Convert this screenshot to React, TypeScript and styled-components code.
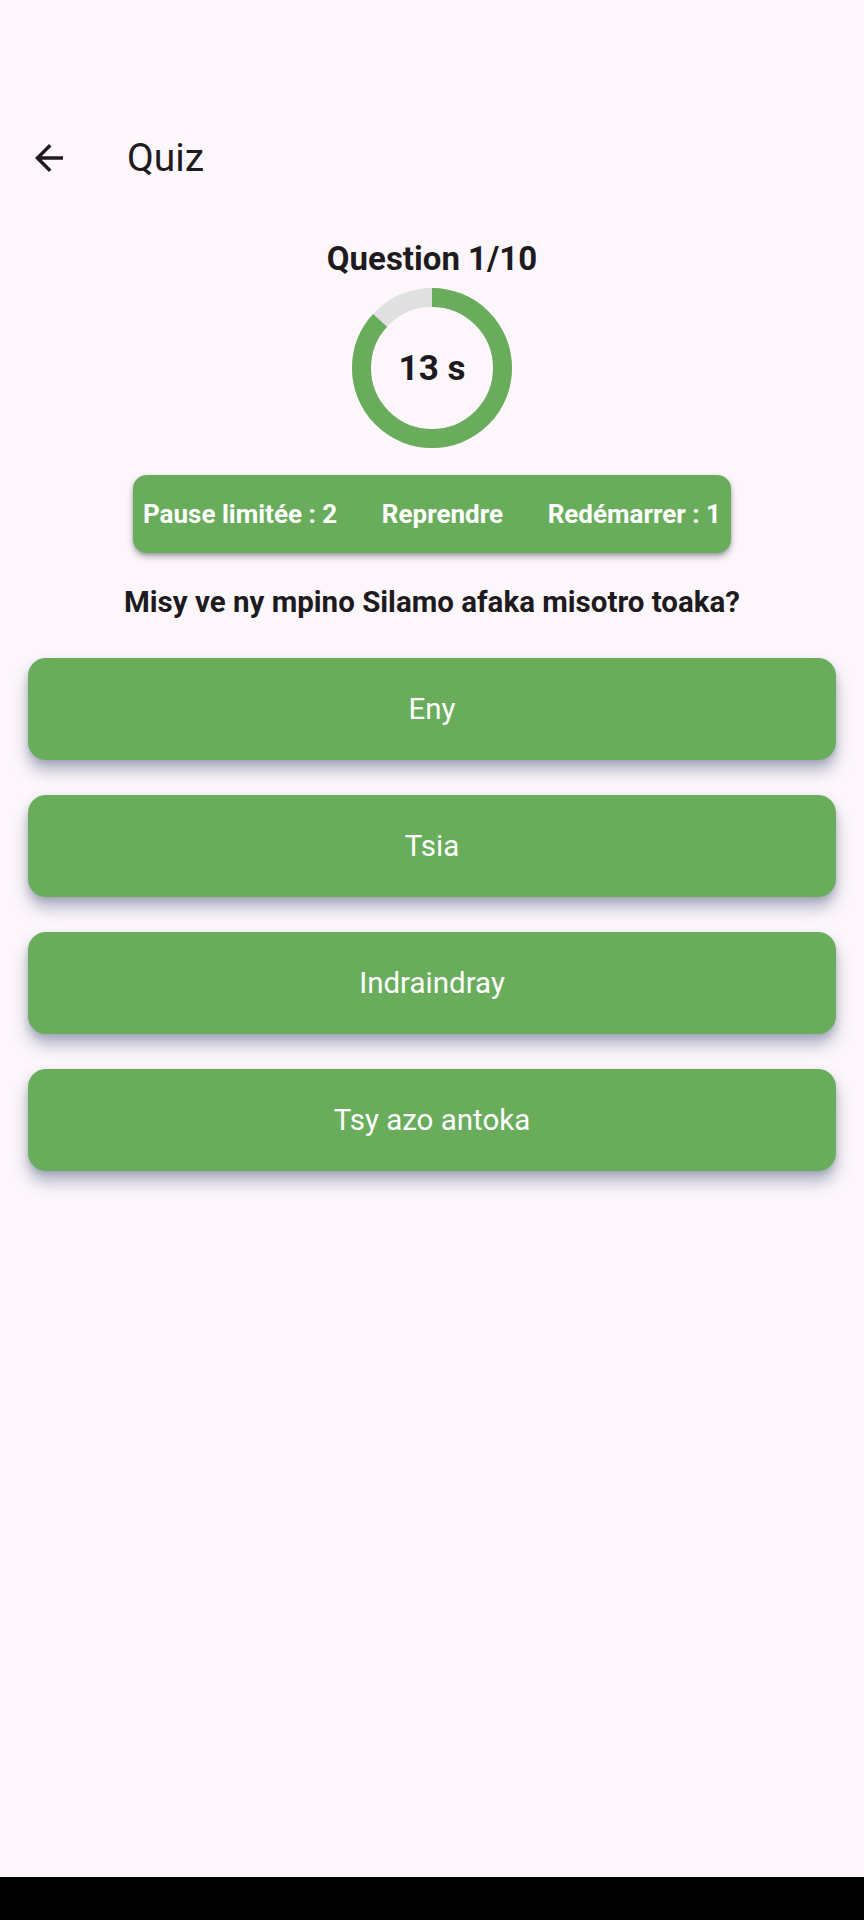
import React from "react";
import styled, { createGlobalStyle } from "styled-components";

const GREEN = "#69ad5c";
const INK = "#1d1b20";

const GlobalStyle = createGlobalStyle`
  html, body {
    margin: 0;
    padding: 0;
    background: #fdf7fc;
  }
  body {
    font-family: Roboto, "Noto Sans", "Liberation Sans", sans-serif;
    color: ${INK};
  }
`;

const Screen = styled.div`
  width: 864px;
  height: 1920px;
  display: flex;
  flex-direction: column;
  background: #fdf7fc;
  overflow: hidden;
`;

const StatusSpace = styled.div`
  height: 109px;
  flex-shrink: 0;
`;

const AppBar = styled.header`
  height: 98px;
  display: flex;
  align-items: center;
  flex-shrink: 0;
`;

const BackButton = styled.button`
  width: 98px;
  height: 98px;
  display: flex;
  align-items: center;
  justify-content: center;
  border: none;
  background: transparent;
  padding: 0;
  margin: 0;
  color: ${INK};
`;

const Title = styled.h1`
  margin: 0 0 0 29px;
  font-size: 39px;
  font-weight: 400;
  line-height: 44px;
  color: ${INK};
`;

const Body = styled.main`
  flex: 1;
  display: flex;
  flex-direction: column;
  align-items: center;
  padding: 33px 28px 0;
`;

const QuestionCount = styled.h2`
  margin: 0;
  font-size: 33px;
  font-weight: 700;
  line-height: 38px;
`;

const TimerWrap = styled.div`
  position: relative;
  width: 160px;
  height: 160px;
  margin-top: 10px;
`;

const TimerLabel = styled.span`
  position: absolute;
  inset: 0;
  display: flex;
  align-items: center;
  justify-content: center;
  font-size: 35px;
  font-weight: 700;
  line-height: 1;
  color: ${INK};
`;

const ControlBar = styled.div`
  width: 598px;
  height: 78px;
  margin-top: 27px;
  box-sizing: border-box;
  padding: 0 10px;
  display: flex;
  align-items: center;
  justify-content: space-between;
  background: ${GREEN};
  border-radius: 14px;
  box-shadow: 0 4px 6px rgba(40, 40, 50, 0.35), 0 1px 3px rgba(40, 40, 50, 0.2);
`;

const ControlText = styled.span`
  color: #fff;
  font-size: 26px;
  font-weight: 700;
  line-height: 1;
  white-space: nowrap;
`;

const QuestionText = styled.p`
  margin: 30px 0 0;
  font-size: 29.5px;
  font-weight: 700;
  line-height: 38px;
  text-align: center;
`;

const Answers = styled.div`
  width: 100%;
  display: flex;
  flex-direction: column;
  gap: 35px;
  margin-top: 37px;
`;

const AnswerButton = styled.button`
  width: 100%;
  height: 102px;
  border: none;
  border-radius: 18px;
  background: ${GREEN};
  color: #fff;
  font-family: Roboto, "Noto Sans", "Liberation Sans", sans-serif;
  font-size: 29.5px;
  font-weight: 400;
  box-shadow: 0 11px 16px rgba(70, 85, 120, 0.4), 0 3px 6px rgba(70, 85, 120, 0.22);
`;

const NavBar = styled.div`
  height: 43px;
  flex-shrink: 0;
  background: #000;
`;

const Timer: React.FC<{ seconds: number; total: number }> = ({ seconds, total }) => {
  const stroke = 19;
  const r = (160 - stroke) / 2;
  const c = 2 * Math.PI * r;
  const done = (seconds / total) * c;
  return (
    <TimerWrap>
      <svg width="160" height="160" viewBox="0 0 160 160">
        <circle cx="80" cy="80" r={r} fill="none" stroke="#e0e0e0" strokeWidth={stroke} />
        <circle
          cx="80"
          cy="80"
          r={r}
          fill="none"
          stroke={GREEN}
          strokeWidth={stroke}
          strokeDasharray={`${done} ${c}`}
          transform="rotate(-90 80 80)"
        />
      </svg>
      <TimerLabel>{seconds} s</TimerLabel>
    </TimerWrap>
  );
};

const answers = ["Eny", "Tsia", "Indraindray", "Tsy azo antoka"];

export default function App() {
  return (
    <>
      <GlobalStyle />
      <Screen>
        <StatusSpace />
        <AppBar>
          <BackButton aria-label="Retour">
            <svg width="42" height="42" viewBox="0 0 24 24" fill="currentColor">
              <path d="M20 11H7.83l5.59-5.59L12 4l-8 8 8 8 1.41-1.41L7.83 13H20v-2z" />
            </svg>
          </BackButton>
          <Title>Quiz</Title>
        </AppBar>
        <Body>
          <QuestionCount>Question 1/10</QuestionCount>
          <Timer seconds={13} total={15} />
          <ControlBar>
            <ControlText>Pause limitée : 2</ControlText>
            <ControlText>Reprendre</ControlText>
            <ControlText>Redémarrer : 1</ControlText>
          </ControlBar>
          <QuestionText>Misy ve ny mpino Silamo afaka misotro toaka?</QuestionText>
          <Answers>
            {answers.map((a) => (
              <AnswerButton key={a}>{a}</AnswerButton>
            ))}
          </Answers>
        </Body>
        <NavBar />
      </Screen>
    </>
  );
}
